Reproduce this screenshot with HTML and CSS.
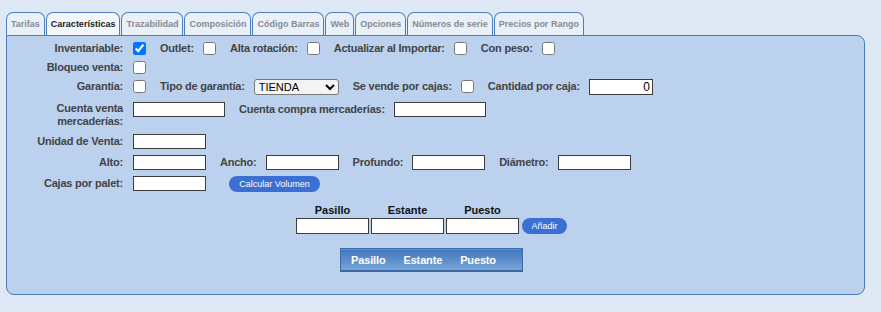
FILE: index.html
```html
<!DOCTYPE html>
<html lang="es">
<head>
  <meta charset="UTF-8" />
  <meta name="viewport" content="width=device-width, initial-scale=1.0" />
  <title>Características</title>
  <link rel="stylesheet" href="styles.css">
</head>
<body>

  <div class="tabs">
    <span class="tab">Tarifas</span>
    <span class="tab active">Características</span>
    <span class="tab">Trazabilidad</span>
    <span class="tab">Composición</span>
    <span class="tab">Código Barras</span>
    <span class="tab">Web</span>
    <span class="tab">Opciones</span>
    <span class="tab">Números de serie</span>
    <span class="tab">Precios por Rango</span>
  </div>

  <div class="panel">
    <div class="row">
      <label class="lbl first">Inventariable:</label>
      <input type="checkbox" class="chk" checked />
      <label class="lbl">Outlet:</label>
      <input type="checkbox" class="chk" />
      <label class="lbl">Alta rotación:</label>
      <input type="checkbox" class="chk" />
      <label class="lbl">Actualizar al Importar:</label>
      <input type="checkbox" class="chk" />
      <label class="lbl">Con peso:</label>
      <input type="checkbox" class="chk" />
    </div>

    <div class="row">
      <label class="lbl first">Bloqueo venta:</label>
      <input type="checkbox" class="chk" />
    </div>

    <div class="row">
      <label class="lbl first">Garantía:</label>
      <input type="checkbox" class="chk" />
      <label class="lbl">Tipo de garantía:</label>
      <select class="sel">
        <option>TIENDA</option>
      </select>
      <label class="lbl">Se vende por cajas:</label>
      <input type="checkbox" class="chk" />
      <label class="lbl">Cantidad por caja:</label>
      <input type="text" class="txt qty" value="0" />
    </div>

    <div class="row top">
      <label class="lbl first">Cuenta venta mercaderías:</label>
      <input type="text" class="txt long" />
      <label class="lbl">Cuenta compra mercaderías:</label>
      <input type="text" class="txt long" />
    </div>

    <div class="row wide">
      <label class="lbl first">Unidad de Venta:</label>
      <input type="text" class="txt" />
    </div>

    <div class="row wide">
      <label class="lbl first">Alto:</label>
      <input type="text" class="txt" />
      <label class="lbl">Ancho:</label>
      <input type="text" class="txt" />
      <label class="lbl">Profundo:</label>
      <input type="text" class="txt" />
      <label class="lbl">Diámetro:</label>
      <input type="text" class="txt" />
    </div>

    <div class="row wide">
      <label class="lbl first">Cajas por palet:</label>
      <input type="text" class="txt" />
      <button class="pill calc">Calcular Volumen</button>
    </div>

    <div class="place">
      <div class="place-grid">
        <span class="head">Pasillo</span>
        <span class="head">Estante</span>
        <span class="head">Puesto</span>
        <span></span>
        <input type="text" class="txt place-in" />
        <input type="text" class="txt place-in" />
        <input type="text" class="txt place-in" />
        <button class="pill add">Añadir</button>
      </div>

      <table class="places">
        <thead>
          <tr>
            <th>Pasillo</th>
            <th>Estante</th>
            <th>Puesto</th>
          </tr>
        </thead>
      </table>
    </div>
  </div>

</body>
</html>
```

FILE: styles.css
```css
body {
  margin: 0;
  padding: 12px 16px 0 6px;
  background-color: #dfe9f5;
  font-family: "Liberation Sans", Arial, sans-serif;
}

.tabs {
  display: flex;
  gap: 1px;
}

.tab {
  height: 22px;
  line-height: 22px;
  padding: 0 4px;
  border: 1px solid #4d7fbd;
  border-bottom: none;
  border-radius: 7px 7px 0 0;
  background-color: #eaf0f8;
  color: #858b93;
  font-size: 9px;
  font-weight: bold;
}

.tab.active {
  background-color: #f3f6fb;
  color: #222;
}

.panel {
  padding: 3px 0 22px 0;
  border: 1px solid #4a7cba;
  border-radius: 0 8px 8px 8px;
  background-color: #bbd1ee;
}

.row {
  display: flex;
  align-items: center;
  min-height: 19px;
}

.row.top {
  align-items: flex-start;
  padding: 6px 0 3px;
}

.row.wide {
  min-height: 21px;
}

.lbl {
  margin: 0 9px 0 14px;
  font-size: 11px;
  font-weight: bold;
  line-height: 13px;
  letter-spacing: -0.22px;
  color: #444;
  white-space: nowrap;
}

.lbl.first {
  width: 116px;
  margin: 0 10px 0 0;
  text-align: right;
  white-space: normal;
}

.row.top .lbl:not(.first) {
  line-height: 14px;
}

.chk {
  width: 13px;
  height: 13px;
  margin: 0;
}

.txt {
  box-sizing: border-box;
  width: 73px;
  height: 15px;
  margin: 0;
  padding: 0 2px;
  border: 1px solid #3c3c3c;
  background-color: #fff;
  font-family: "Liberation Sans", Arial, sans-serif;
  font-size: 11px;
}

.txt.long {
  width: 92px;
}

.txt.qty {
  width: 64px;
  height: 16px;
  text-align: right;
  color: #000;
  font-size: 12px;
}

.sel {
  box-sizing: border-box;
  width: 85px;
  height: 16px;
  margin: 0;
  padding: 0;
  border: 1px solid #777;
  border-radius: 3px;
  background-color: #f4f4f4;
  font-family: "Liberation Sans", Arial, sans-serif;
  font-size: 11px;
  color: #000;
}

.pill {
  height: 16px;
  padding: 0;
  border: none;
  border-radius: 8px;
  background-color: #3a6fd3;
  color: #fff;
  font-family: "Liberation Sans", Arial, sans-serif;
  font-size: 9px;
}

.calc {
  width: 91px;
  margin-left: 23px;
}

.place {
  display: flex;
  flex-direction: column;
  align-items: center;
  margin-top: 9px;
  padding-right: 8px;
}

.place-grid {
  display: grid;
  grid-template-columns: 73px 73px 73px 46px;
  column-gap: 2px;
  row-gap: 1px;
}

.head {
  font-size: 11px;
  font-weight: bold;
  line-height: 14px;
  color: #111;
  text-align: center;
}

.place-in {
  height: 16px;
}

.add {
  width: 45px;
  margin-left: 1px;
}

.places {
  margin-top: 14px;
  border-collapse: collapse;
}

.places th {
  height: 21px;
  padding: 0 8px 0 10px;
  border-top: 1px solid #3d6ea9;
  border-bottom: 2px solid #3a68a3;
  background: linear-gradient(#3f78bf, #7aa4d6);
  color: #fff;
  font-size: 11px;
  font-weight: bold;
  letter-spacing: -0.15px;
  text-align: left;
}

.places th:first-child {
  border-left: 1px solid #3d6ea9;
}

.places th:last-child {
  padding-right: 26px;
  border-right: 1px solid #3d6ea9;
}
```
